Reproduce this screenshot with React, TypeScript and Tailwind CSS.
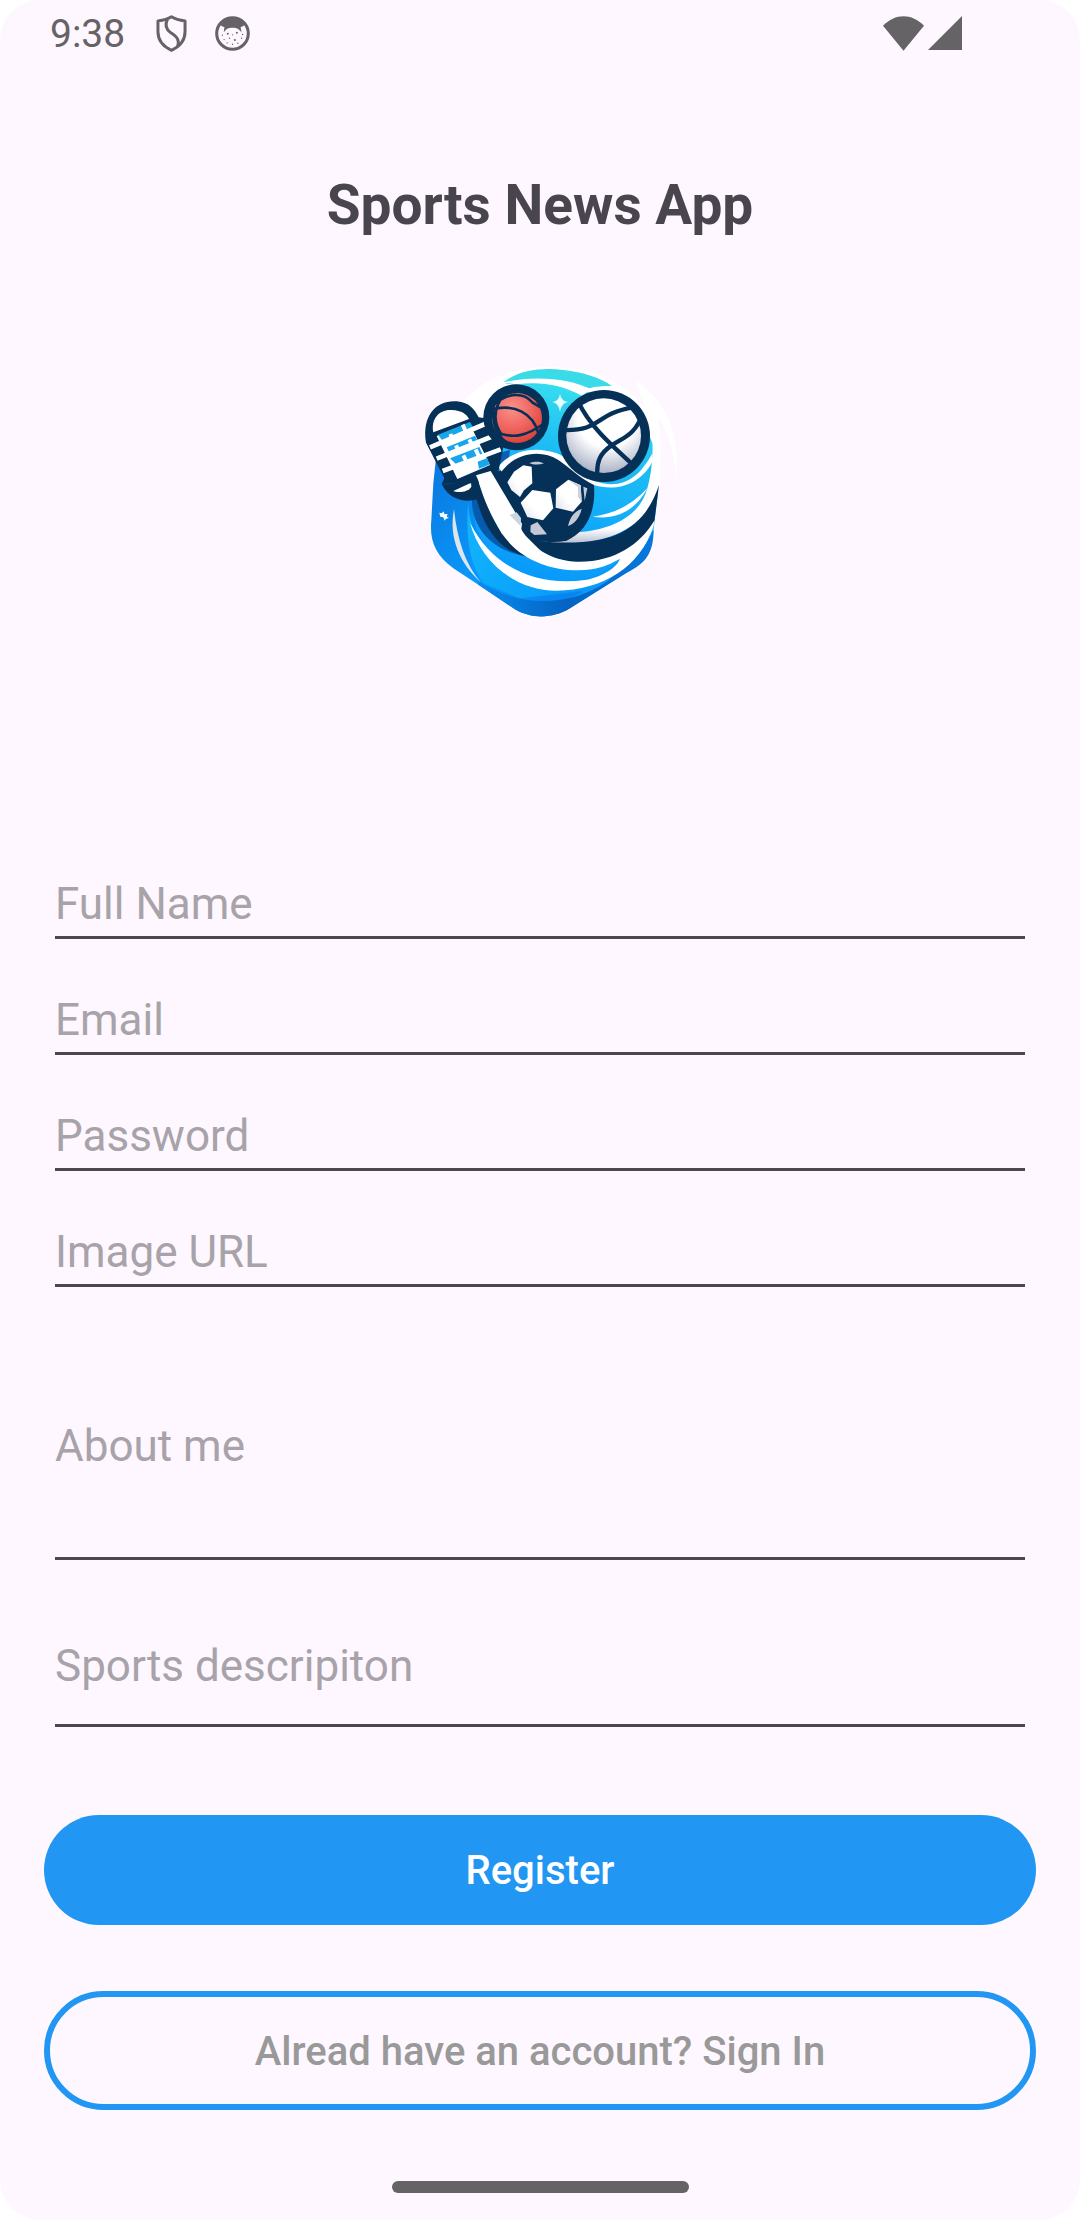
import React from "react";

function ShieldIcon() {
  return (
    <svg viewBox="0 0 92 112" className="h-[37px] w-[31px]" fill="none" stroke="#656366" strokeWidth="9" strokeLinejoin="round" aria-hidden="true">
      <path d="M46 5 C36 11 18 16 5 18 V51 C5 77 22 96 46 107 C70 96 87 77 87 51 V18 C74 16 56 11 46 5 Z" />
      <path d="M34 12 C24 32 30 44 44 54 C65 67 71 78 64 96" />
    </svg>
  );
}

function CatIcon() {
  return (
    <svg viewBox="0 0 104 104" className="size-[35px]" aria-hidden="true">
      <circle cx="52" cy="52" r="47" fill="none" stroke="#656366" strokeWidth="9" />
      <path d="M14 24 C34 0 70 0 90 24 C86 30 80 32 76 33 L79 48 L70 39 C60 34 44 34 34 39 L26 48 L28 33 C22 32 18 29 14 24 Z" fill="#656366" />
      <g fill="#656366">
        <circle cx="38" cy="53" r="3" /><circle cx="65" cy="50" r="3" />
        <circle cx="22" cy="57" r="2" /><circle cx="27" cy="70" r="2" />
        <circle cx="43" cy="66" r="2" /><circle cx="59" cy="71" r="3" />
        <circle cx="79" cy="66" r="2" /><circle cx="82" cy="55" r="2" />
        <circle cx="36" cy="80" r="2" /><circle cx="52" cy="84" r="2" />
        <circle cx="68" cy="81" r="2" /><circle cx="52" cy="56" r="2" />
      </g>
    </svg>
  );
}

function SportsLogo() {
  return (
    <svg viewBox="0 0 840 840" className="size-[280px]" role="img" aria-label="Sports News logo">
      <defs>
        <linearGradient id="sea" x1="0.65" y1="0" x2="0.4" y2="1">
          <stop offset="0" stopColor="#3be3ee" />
          <stop offset="0.3" stopColor="#1dbcf3" />
          <stop offset="0.65" stopColor="#0da4fb" />
          <stop offset="1" stopColor="#0590f8" />
        </linearGradient>
        <linearGradient id="side" x1="0" y1="0" x2="1" y2="1">
          <stop offset="0" stopColor="#0a76dd" />
          <stop offset="0.55" stopColor="#0a99fb" />
          <stop offset="1" stopColor="#0780eb" />
        </linearGradient>
        <linearGradient id="wave" x1="0" y1="0" x2="1" y2="0.3">
          <stop offset="0" stopColor="#12b6fb" />
          <stop offset="1" stopColor="#0692fb" />
        </linearGradient>
        <linearGradient id="base" x1="0" y1="0" x2="1" y2="0">
          <stop offset="0" stopColor="#078cf2" />
          <stop offset="0.5" stopColor="#0563c2" />
          <stop offset="1" stopColor="#0878dc" />
        </linearGradient>
        <radialGradient id="basket" cx="0.4" cy="0.3" r="0.8">
          <stop offset="0" stopColor="#fa9188" />
          <stop offset="0.55" stopColor="#ee625c" />
          <stop offset="1" stopColor="#d6382f" />
        </radialGradient>
        <radialGradient id="volley" cx="0.55" cy="0.25" r="0.8">
          <stop offset="0.5" stopColor="#ffffff" />
          <stop offset="1" stopColor="#a1a9c0" />
        </radialGradient>
        <linearGradient id="panel" x1="0" y1="1" x2="1" y2="0">
          <stop offset="0" stopColor="#dfe1ec" />
          <stop offset="0.4" stopColor="#ffffff" />
        </linearGradient>
        <linearGradient id="ribbon" x1="0" y1="0" x2="0" y2="1">
          <stop offset="0.9" stopColor="#ffffff" />
          <stop offset="1" stopColor="#b7bed0" />
        </linearGradient>
        <clipPath id="basket-clip">
          <circle cx="321" cy="204" r="78" />
        </clipPath>
        <clipPath id="volley-clip">
          <circle cx="581" cy="257" r="114" />
        </clipPath>
      </defs>

      {/* pale halo and outer streak */}
      <path d="M155 160 C220 85 320 45 440 52 C560 60 650 100 705 175 L678 93 C724 128 755 200 752 290 L748 420 L500 520 L200 400 Z" fill="#fff" />
      <path d="M678 93 C760 145 815 245 798 390 C794 280 752 190 700 145 Z" fill="#fff" />

      {/* badge body */}
      <path d="M272 106 C350 78 450 83 525 122 L690 190 L736 300 L744 430 L728 560 C722 615 700 640 650 668 L480 775 C430 806 365 808 315 778 L205 700 L80 500 L80 320 L200 130 Z" fill="url(#sea)" />
      <path d="M155 160 C210 105 250 98 325 104 C275 115 240 145 228 215 L205 205 Z" fill="#fff" />
      <path d="M280 97 C330 58 400 53 460 60 C520 66 570 84 605 107 C570 108 545 110 525 120 C460 84 365 84 280 97 Z" fill="#3adbe9" />
      <path d="M276 98 C370 75 475 84 545 118 L515 137 C455 104 390 94 320 103 Z" fill="#fff" />
      <path d="M78 325 L180 430 L200 540 L260 640 L360 710 L520 725 L400 780 L315 778 L205 704 L130 655 C75 615 58 570 64 510 L70 400 Z" fill="url(#side)" />
      <path d="M175 450 C170 560 260 690 470 690 C560 690 620 650 640 610 L720 590 L650 655 L500 725 L330 745 L220 700 C180 640 165 570 175 450 Z" fill="url(#wave)" />
      <path d="M205 694 C330 775 480 770 590 695 C650 650 695 610 731 540 C730 610 708 640 650 668 L480 775 C430 806 365 808 315 778 L205 704 Z" fill="url(#base)" />
      <path d="M132 478 C142 570 165 640 212 697 C150 640 115 565 132 478 Z" fill="#dce6eb" />
      <path d="M88 488 L96 490 L100 484 L104 493 L113 492 L110 500 L117 504 L108 506 L104 512 L100 502 L91 500 Z" fill="#fff" />

      {/* shadow behind the handle */}
      <path d="M185 445 C185 530 240 600 345 618 L290 440 Z" fill="#055bad" />
      <path d="M198 440 C220 530 265 602 350 620 L400 560 L280 360 L195 380 Z" fill="#053159" />

      {/* right-hand ribbons */}
      <path d="M480 548 C600 545 690 500 712 415 C728 360 742 240 700 150 L735 165 C752 220 754 330 748 415 C700 545 580 592 405 577 Z" fill="url(#ribbon)" />
      <path d="M747 405 C700 545 600 590 410 575 L340 565 C410 630 480 640 545 637 C650 622 710 570 733 515 Z" fill="#053159" />
      <path d="M200 375 C222 455 245 500 275 550 C340 645 455 670 545 658 C580 652 605 640 630 626 C622 650 580 680 525 690 C380 710 250 655 180 518 C210 630 310 722 440 722 C580 720 690 650 730 530 L734 510 C690 585 610 638 500 635 C420 632 360 590 330 530 L245 370 Z" fill="#fff" />
      <path d="M548 500 C620 490 670 460 712 414 C680 478 620 512 548 500 Z" fill="#fff" />
      <path d="M263 310 L300 300 L296 330 L268 350 Z" fill="#0a5fb5" />

      {/* football */}
      <path d="M265 350 C300 305 370 285 440 310 C480 325 500 370 555 393 C630 420 685 390 727 310 L727 335 C690 405 620 425 550 405 L300 400 Z" fill="#fff" />
      <path d="M270 372 C310 310 390 295 445 330 C475 350 510 385 552 405 C558 485 530 545 470 572 C430 580 390 578 350 555 L330 520 L260 400 Z" fill="#053159" />
      <path d="M312 365 L340 346 L365 350 L367 400 L342 421 L330 441 L304 420 L292 397 Z" fill="url(#panel)" />
      <path d="M367 420 L421 428 L430 475 L399 511 L352 501 L332 458 Z" fill="url(#panel)" />
      <path d="M438 418 L475 389 L512 406 L515 455 L489 485 L437 473 Z" fill="url(#panel)" />
      <path d="M475 389 L512 406 L515 455 L504 440 L504 412 Z" fill="#ced0df" />
      <path d="M520 410 L532 415 L524 452 Z M358 339 C375 333 390 334 402 340 C388 345 370 345 358 339 Z M515 476 C508 507 491 522 474 528 C480 502 492 485 515 476 Z M362 526 L382 516 L411 553 L373 555 L361 545 Z" fill="#c5c9d7" />

      {/* racket */}
      <path d="M95 402 C135 405 165 390 205 380 L210 445 C175 459 120 455 95 402 Z" fill="#053159" />
      <path d="M130 423 L183 398 L184 410 C175 426 145 430 130 423 Z" fill="#fff" />
      <path d="M95 402 L103 385 L48 278 C35 195 80 150 140 154 C180 157 194 180 206 202 L225 205 L280 290 L265 365 L185 400 Z" fill="#053159" />
      <path d="M70 247 C62 205 90 177 125 180 C155 182 170 192 177 207 Z" fill="#fff" />
      <path d="M80 258 L178 219 L240 345 L142 387 Z" fill="#fff" />
      <path d="M84 254 L180 216 L192 236 L100 275 Z M110 292 L195 257 L205 277 L120 312 Z M120 325 L208 291 L217 312 L140 344 Z M203 335 L232 324 L238 344 L207 356 Z" fill="#17a5ec" />
      <g stroke="#fff" strokeWidth="12">
        <path d="M121 252 L130 272 M158 224 L168 246 M138 286 L147 306 M178 268 L187 286 M160 316 L172 340 M197 298 L206 318" />
      </g>
      <g stroke="#fff" strokeWidth="14">
        <path d="M60 292 L225 222 M80 326 L250 258 M98 363 L272 298" />
      </g>
      <path d="M198 376 L242 363 L336 521 L333 544 L420 630 L330 594 L275 550 Z" fill="#fff" />
      <path d="M299 495 L320 487 L333 504 L332 529 Z" fill="#cbd4e1" />

      {/* basketball */}
      <circle cx="319" cy="202" r="99" fill="#053159" />
      <circle cx="321" cy="204" r="75" fill="url(#basket)" />
      <path d="M250 165 C300 122 345 130 368 158 L392 172 M240 178 C315 160 370 190 385 250 M250 170 C246 225 262 263 300 284 M284 130 C240 185 258 230 274 252 C315 264 350 257 400 222" fill="none" stroke="#053159" strokeWidth="8" clipPath="url(#basket-clip)" />

      {/* volleyball */}
      <circle cx="582" cy="258" r="138" fill="#053159" />
      <circle cx="581" cy="257" r="112" fill="url(#volley)" />
      <path d="M505 155 C535 223 598 280 675 350 M460 240 C575 244 555 190 670 172 M698 190 C678 255 635 265 604 287 C570 310 559 335 562 378" fill="none" stroke="#053159" strokeWidth="13" clipPath="url(#volley-clip)" />

      <path d="M450 132 Q454 153 474 156 Q454 160 450 185 Q446 160 427 156 Q447 153 450 132 Z" fill="#e5ffff" />
    </svg>
  );
}

const singleLineFields = [
  { id: "full-name", label: "Full Name", type: "text" },
  { id: "email", label: "Email", type: "email" },
  { id: "password", label: "Password", type: "password" },
  { id: "image-url", label: "Image URL", type: "url" },
];

const fieldClass =
  "block w-full resize-none rounded-none border-b-[3px] border-[#4b484f] bg-transparent text-[44px] leading-[52px] text-[#49454f] outline-none placeholder:text-[#a7a3a9] placeholder:opacity-100";

export default function App() {
  return (
    <div className="bg-white font-['Roboto',sans-serif]">
      <div className="flex min-h-screen flex-col rounded-[40px] bg-[#fef7ff]">
        <header className="flex h-[66px] items-center pr-[118px] pl-[50px] text-[#656366]">
          <time className="pt-0.5 text-[39px] leading-[44px]">9:38</time>
          <div className="ml-[31px] flex items-center gap-7">
            <ShieldIcon />
            <CatIcon />
          </div>
          <div className="ml-auto flex items-center gap-1">
            <svg viewBox="0 0 122 104" className="h-[35px] w-[41px]" fill="#656366" aria-hidden="true">
              <path d="M0 29 C36 -9 86 -9 122 29 L61 103 Z" />
            </svg>
            <svg viewBox="0 0 34 34" className="size-[34px]" fill="#656366" aria-hidden="true">
              <path d="M34 0 V34 H0 Z" />
            </svg>
          </div>
        </header>

        <main className="flex flex-col px-11">
          <h1 className="mt-[107px] text-center text-[55px] leading-[64px] font-bold text-[#49454f]">Sports News App</h1>
          <div className="mt-[113px] flex justify-center pl-5">
            <SportsLogo />
          </div>

          <form className="mt-[248px] flex flex-col" onSubmit={(e) => e.preventDefault()}>
            <div className="flex flex-col gap-[55px] px-[11px]">
              {singleLineFields.map((field) => (
                <input key={field.id} id={field.id} type={field.type} aria-label={field.label} placeholder={field.label} className={`${fieldClass} pb-1.5`} />
              ))}
            </div>
            <div className="mt-[133px] flex flex-col gap-20 px-[11px]">
              <textarea rows={1} aria-label="About me" placeholder="About me" className={`${fieldClass} pb-[85px]`} />
              <textarea rows={1} aria-label="Sports description" placeholder="Sports descripiton" className={`${fieldClass} pb-8`} />
            </div>
            <button type="submit" className="mt-[88px] h-[110px] rounded-full bg-[#2196f3] pt-0.5 text-[40px] leading-[46px] font-medium text-white">
              Register
            </button>
            <button type="button" className="mt-[66px] h-[119px] rounded-full border-[6px] border-[#2196f3] pt-0.5 text-[40px] leading-[46px] font-medium text-[#999999]">
              Alread have an account? Sign In
            </button>
          </form>
        </main>

        <div className="mx-auto mt-auto mb-[27px] h-3 w-[297px] rounded-full bg-[#656366]" />
      </div>
    </div>
  );
}
